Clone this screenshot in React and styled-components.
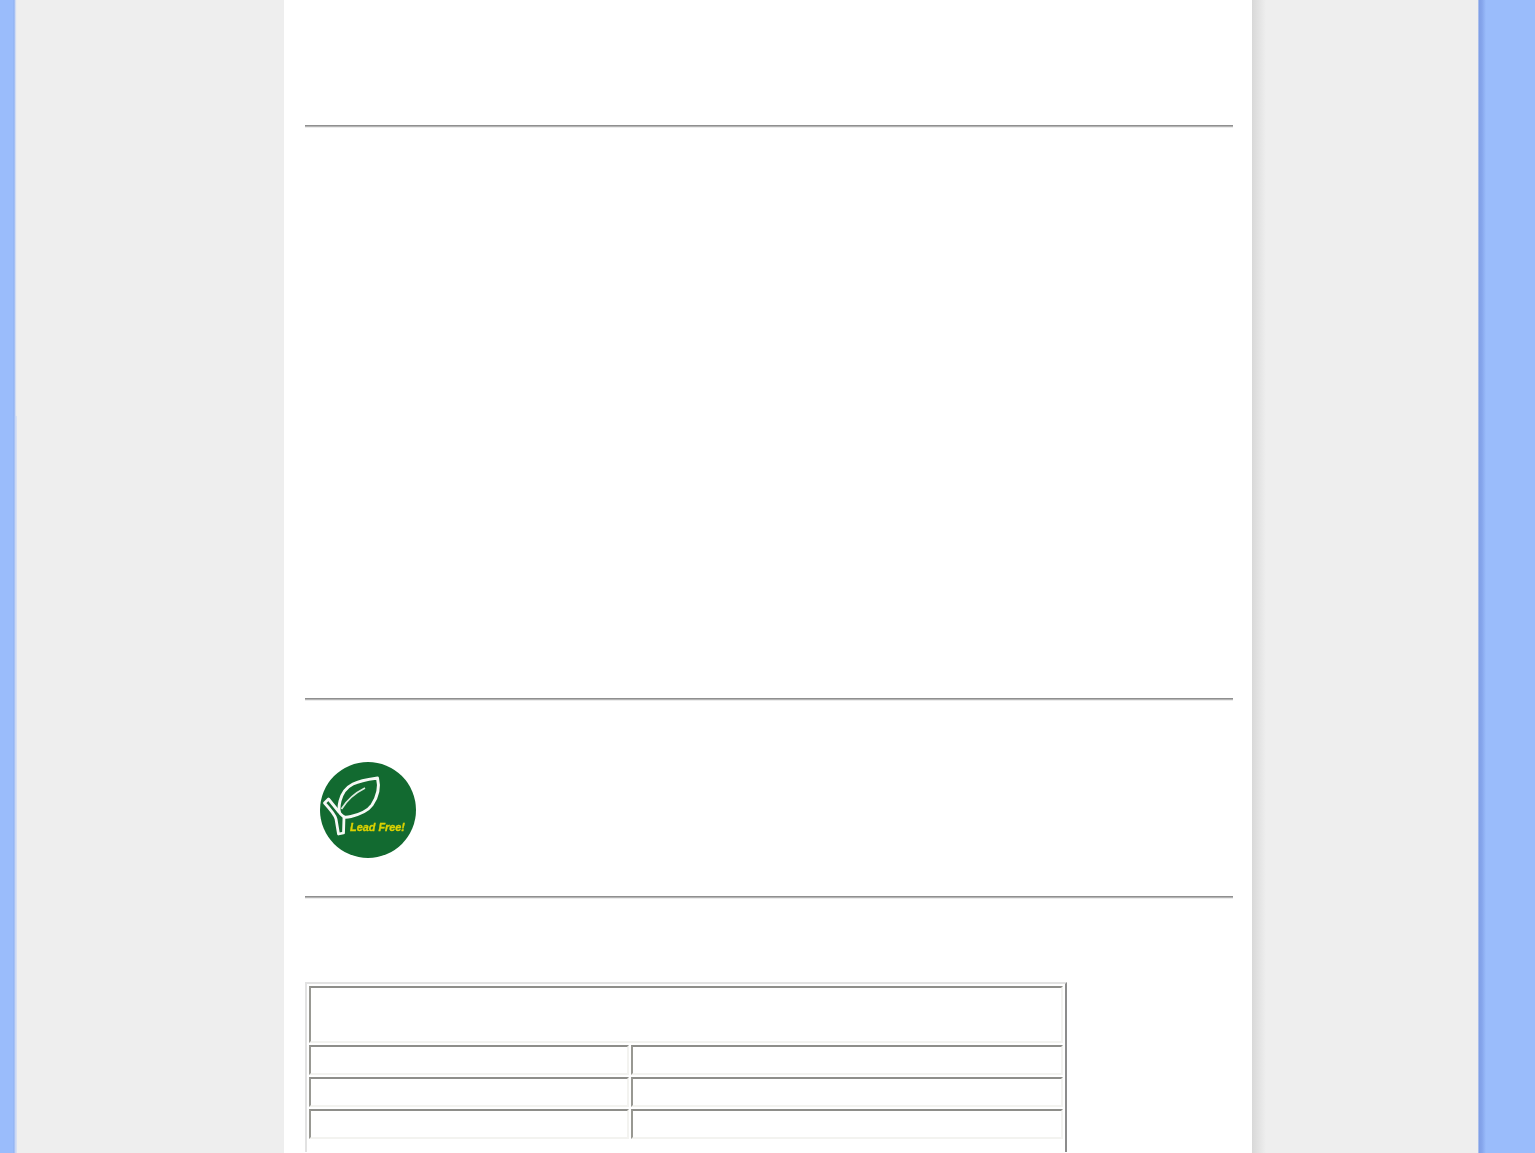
import React from "react";
import styled, { createGlobalStyle } from "styled-components";

const GlobalStyle = createGlobalStyle`
	html, body {
		margin: 0;
		padding: 0;
		background: #fff;
		font-family: "Liberation Sans", Arial, sans-serif;
	}
`;

function LeadFreeLogo() {
	return (
		<LogoSvg width="96" height="96" viewBox="0 0 96 96">
			<circle cx="48" cy="48" r="48" fill="#126a30" />
			<path
				d="M20 39 C22 31 27 25 33 22 C41 18 50 17 57.5 16 C59.5 24 58 34 52 43 C47 50 39 52.5 31 54.5 C27 55.5 23 55.5 20.5 54 C18.5 50 18.5 45 20 39 Z"
				fill="none"
				stroke="#f6f9f6"
				strokeWidth="3"
				strokeLinejoin="round"
			/>
			<path d="M21.5 47 C27 38 35 31 45 26" fill="none" stroke="#dcebdf" strokeWidth="1.8" />
			<path
				d="M4.5 41 L8.5 37 L19 50 C21 53 23 54 24 55 L23.5 71 L18.5 72 L16 57 C15 53 10 47 4.5 41 Z"
				fill="#126a30"
				stroke="#f6f9f6"
				strokeWidth="2.8"
				strokeLinejoin="round"
			/>
			<Badge x="30" y="69" textLength="55" lengthAdjust="spacingAndGlyphs">
				Lead Free!
			</Badge>
		</LogoSvg>
	);
}

function App() {
	return (
		<>
			<GlobalStyle />
			<Page>
				<LeftBand>
					<BandTop />
					<BandLower />
				</LeftBand>
				<LeftMargin />
				<Sheet>
					<Rule $top={125} />
					<Rule $top={570} />
					<LogoRow>
						<LeadFreeLogo />
					</LogoRow>
					<Rule $top={38} />
					<SpecTable>
						<colgroup>
							<col width="320" />
							<col width="432" />
						</colgroup>
						<tbody>
							<tr>
								<HeadCell colSpan={2} />
							</tr>
							<tr>
								<RowCell />
								<RowCell />
							</tr>
							<tr>
								<RowCell />
								<RowCell />
							</tr>
							<tr>
								<RowCell />
								<RowCell />
							</tr>
							<tr>
								<BareCell colSpan={2} />
							</tr>
						</tbody>
					</SpecTable>
				</Sheet>
				<ShadowEdge />
				<RightMargin />
				<RightBand />
			</Page>
		</>
	);
}

const Page = styled.div`
	display: flex;
	width: 1535px;
	height: 1153px;
	overflow: hidden;
	background-color: #eeeeee;
`;

const LeftBand = styled.div`
	flex: 0 0 17px;
	display: flex;
	flex-direction: column;
`;

const BandTop = styled.div`
	flex: 0 0 416px;
	background: linear-gradient(
		to right,
		#9abcfb 0,
		#9abcfb 13px,
		#8fb0f0 14px,
		#bccff5 15px,
		#e4e8f0 16px,
		#eeeeee 17px
	);
`;

const BandLower = styled.div`
	flex: 1;
	background: linear-gradient(
		to right,
		#9abcfb 0,
		#9abcfb 13px,
		#8fb0f0 14px,
		#c4d4f5 15px,
		#d6dff3 16.5px,
		#eeeeee 17px
	);
`;

const LeftMargin = styled.div`
	flex: 0 0 267px;
	background-color: #eeeeee;
`;

const RightMargin = styled.div`
	flex: 1 1 0;
	background-color: #eeeeee;
`;

const RightBand = styled.div`
	flex: 0 0 57px;
	background: linear-gradient(
		to right,
		#d4dff3 0,
		#7f9ee6 1px,
		#86a6ec 4px,
		#9abcfb 8px,
		#9abcfb 100%
	);
`;

const Sheet = styled.main`
	flex: 0 0 968px;
	box-sizing: border-box;
	height: 1153px;
	padding: 0 19.5px 0 21px;
	background-color: #ffffff;
`;

const ShadowEdge = styled.div`
	flex: 0 0 14px;
	background: linear-gradient(to right, #d8d8d8, #eeeeee);
`;

const Rule = styled.hr`
	height: 3px;
	margin: ${(p) => p.$top}px 0 0;
	border: none;
	background: linear-gradient(
		to bottom,
		#8f8f8f 0,
		#8f8f8f 1px,
		#b4b4b4 1px,
		#b4b4b4 2px,
		#ececec 2px,
		#ececec 3px
	);
`;

const LogoRow = styled.div`
	display: flex;
	height: 96px;
	padding: 61px 0 0 15px;
`;

const LogoSvg = styled.svg`
	display: block;
	filter: blur(0.45px);
`;

const Badge = styled.text`
	font-family: "Liberation Sans", Arial, sans-serif;
	font-size: 11.5px;
	font-weight: 700;
	font-style: italic;
	fill: #dcd200;
	stroke: #dcd200;
	stroke-width: 0.35px;
`;

const SpecTable = styled.table`
	box-sizing: border-box;
	width: 762px;
	margin-top: 83px;
	border-collapse: separate;
	border-spacing: 2px;
	table-layout: fixed;
	border-style: solid;
	border-width: 2px 2px 0;
	border-color: #e2e2e2 #8c8c8c transparent #e2e2e2;
`;

const Cell = styled.td`
	box-sizing: border-box;
	padding: 0;
	border-style: solid;
	border-width: 2px;
	border-color: #8e8e8a #f3f3f0 #f3f3f0 #989892;
`;

const HeadCell = styled(Cell)`
	height: 57px;
`;

const RowCell = styled(Cell)`
	height: 30px;
`;

const BareCell = styled.td`
	height: 9px;
	padding: 0;
`;

export default App;
